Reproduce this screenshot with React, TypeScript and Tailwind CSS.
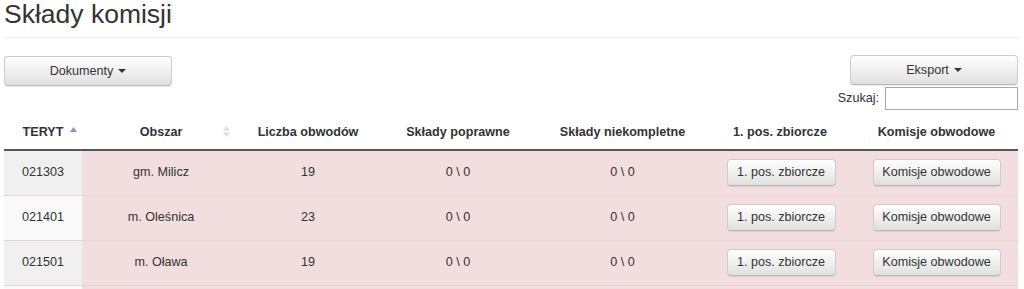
import React from 'react';

const rows = [
    { teryt: '021303', area: 'gm. Milicz', count: '19', ok: '0 \\ 0', partial: '0 \\ 0' },
    { teryt: '021401', area: 'm. Oleśnica', count: '23', ok: '0 \\ 0', partial: '0 \\ 0' },
    { teryt: '021501', area: 'm. Oława', count: '19', ok: '0 \\ 0', partial: '0 \\ 0' },
];

const btn =
    'rounded-[4px] border border-[#ccc] border-b-[#b8b8b8] bg-linear-to-b from-white to-[#e0e0e0] text-[#333] shadow-[inset_0_1px_0_rgba(255,255,255,.15),0_1px_1px_rgba(0,0,0,.075)]';

const Caret = () => (
    <span className="ml-[5px] inline-block h-0 w-0 border-x-[4px] border-t-[4px] border-x-transparent border-t-[#333] align-middle" />
);

const SortAsc = () => (
    <svg width="7" height="5" viewBox="0 0 7 5" className="absolute right-[5px] top-[13px]">
        <path d="M3.5 0 L7 5 L0 5 Z" fill="#8c8fd8" />
    </svg>
);

const SortBoth = () => (
    <svg width="7" height="11" viewBox="0 0 7 11" className="absolute right-[10px] top-[12px]">
        <path d="M3.5 0 L7 4.5 L0 4.5 Z" fill="#dcdcdc" />
        <path d="M0 6.5 L7 6.5 L3.5 11 Z" fill="#dcdcdc" />
    </svg>
);

export default function App() {
    return (
        <div className="min-h-[289px] bg-white px-1 font-['Liberation_Sans',Arial,sans-serif] text-[12.6px] text-[#333]">
            <div className="border-b border-[#eee] pb-2">
                <h1 className="text-[26.5px] leading-[29px] font-normal">Składy komisji</h1>
            </div>

            <div className="mt-[17px] flex items-start justify-between pr-0.5">
                <button className={`${btn} mt-px h-[30px] w-[168px]`}>
                    Dokumenty
                    <Caret />
                </button>
                <div className="flex flex-col items-end">
                    <button className={`${btn} h-[30px] w-[168px]`}>
                        Eksport
                        <Caret />
                    </button>
                    <label className="mt-[2px] flex items-center gap-[6px]">
                        Szukaj:
                        <input className="h-[23px] w-[133px] border border-[#a9a9a9] bg-white" />
                    </label>
                </div>
            </div>

            <table className="mt-[4px] w-[1014px] table-fixed border-collapse text-center">
                <colgroup>
                    <col className="w-[78px]" />
                    <col className="w-[158px]" />
                    <col className="w-[136px]" />
                    <col className="w-[164px]" />
                    <col className="w-[165px]" />
                    <col className="w-[150px]" />
                    <col className="w-[163px]" />
                </colgroup>
                <thead>
                    <tr className="border-b-2 border-[#555] font-bold">
                        <th className="relative h-[36px] pt-[2px]">
                            TERYT
                            <SortAsc />
                        </th>
                        <th className="relative pt-[2px]">
                            Obszar
                            <SortBoth />
                        </th>
                        <th className="pt-[2px]">Liczba obwodów</th>
                        <th className="pt-[2px]">Składy poprawne</th>
                        <th className="pt-[2px]">Składy niekompletne</th>
                        <th className="pt-[2px]">1. pos. zbiorcze</th>
                        <th className="pt-[2px]">Komisje obwodowe</th>
                    </tr>
                </thead>
                <tbody>
                    {rows.map((row, i) => (
                        <tr key={row.teryt} className="h-[45px] border-t border-[#ead3d3] bg-[#f2dede]">
                            <td className={i % 2 === 0 ? 'bg-[#f0f0f0]' : 'bg-[#f9f9f9]'}>{row.teryt}</td>
                            <td>{row.area}</td>
                            <td>{row.count}</td>
                            <td>{row.ok}</td>
                            <td>{row.partial}</td>
                            <td>
                                <button className={`${btn} h-[27px] w-[109px] translate-x-[1px]`}>1. pos. zbiorcze</button>
                            </td>
                            <td>
                                <button className={`${btn} h-[27px] w-[128px]`}>Komisje obwodowe</button>
                            </td>
                        </tr>
                    ))}
                    {/* next row, cut off by the frame */}
                    <tr className="h-[45px] border-t border-[#ead3d3] bg-[#f2dede]">
                        <td className="bg-[#f9f9f9]" />
                        <td colSpan={6} />
                    </tr>
                </tbody>
            </table>
        </div>
    );
}
